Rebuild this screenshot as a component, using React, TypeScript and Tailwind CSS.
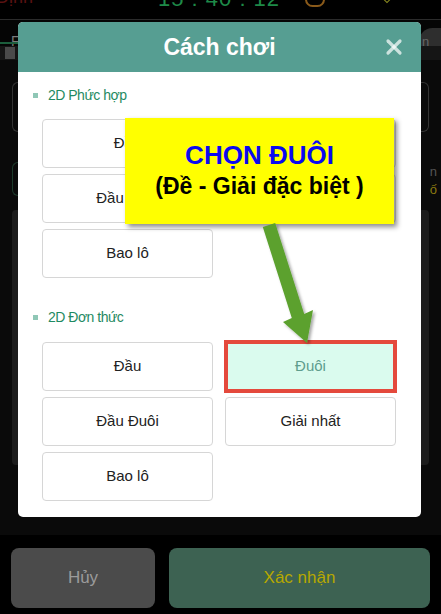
import React from 'react';
import { X } from 'lucide-react';

const font = { fontFamily: '"Liberation Sans", Arial, sans-serif' };

const OptionButton: React.FC<{ label: string; selected?: boolean }> = ({ label, selected }) => {
  if (selected) {
    return (
      <div className="relative flex h-[49px] items-center justify-center bg-[#dafbee] text-[15px] text-[#5e9d8d]">
        <span className="pointer-events-none absolute -inset-x-[1px] -top-[2px] -bottom-[2px] border-[4px] border-[#e4493c]" />
        {label}
      </div>
    );
  }
  return (
    <div className="flex h-[49px] items-center justify-center rounded-[4px] border border-[#d6d6d6] bg-white text-[15px] text-[#222]">
      {label}
    </div>
  );
};

const SectionLabel: React.FC<{ text: string }> = ({ text }) => (
  <div className="-ml-[9px] flex h-[14px] items-center gap-[10px] text-[14px] tracking-[-0.5px] text-[#1f8a62]">
    <span className="h-[5px] w-[5px] bg-[#8fc7b6]" />
    {text}
  </div>
);

const App: React.FC = () => {
  return (
    <div className="relative h-[614px] w-[441px] overflow-hidden bg-black" style={font}>
      {/* dimmed page behind the dialog */}
      <div className="flex h-[535px] flex-col bg-[#0a0a0a]">
        <div className="relative flex h-[19px] items-end overflow-hidden bg-black">
          <span className="absolute left-[-4px] top-[-16px] text-[18px] text-[#5a1212]">Định</span>
          <span className="absolute left-[158px] top-[-18px] text-[22px] tracking-[1px] text-[#1e8a48]">15 : 40 : 12</span>
          <span className="absolute left-[305px] top-[-8px] h-[15px] w-[20px] rounded-full border-[2px] border-[#8a5a1a]" />
          <span className="absolute left-[384px] top-[-4px] h-[6px] w-[6px] rotate-45 border border-[#8a8a20]" />
        </div>
        <div className="h-px bg-[#2b2b2b]" />
        <div className="relative h-[26px] bg-[#050505]">
          <span className="absolute left-[11px] top-[11px] text-[14px] text-[#7a7a7a]">F</span>
          <span className="absolute bottom-[2px] left-0 h-[2px] w-[20px] bg-[#1c5e3c]" />
          <span className="absolute right-[-12px] top-[8px] flex h-[27px] w-[34px] items-center rounded-full bg-[#2e2e2e] pl-[3px] text-[13px] text-[#666]">n</span>
        </div>
        <div className="relative h-[14px] bg-[#151515]">
          <span className="absolute left-[5px] top-[1px] h-[12px] w-[10px] bg-[#4a4a4a]" />
        </div>
        <div className="flex h-[150px] flex-col gap-[30px] px-[12px] pt-[22px]">
          <div className="flex h-[50px] justify-between">
            <span className="w-[20px] rounded-l-[6px] border border-r-0 border-[#333]" />
            <span className="w-[20px] rounded-r-[6px] border border-l-0 border-[#333]" />
          </div>
          <div className="relative flex h-[34px] justify-between">
            <span className="w-[20px] rounded-l-[6px] border border-r-0 border-[#1d3a2c]" />
            <span className="absolute right-[-8px] top-[0px] text-[13px] text-[#555]">n</span>
            <span className="absolute right-[-8px] top-[18px] text-[13px] text-[#8a7a10]">ố</span>
          </div>
        </div>
        <div className="mx-[12px] h-[255px] rounded-[4px] bg-[#1c1c1c]" />
      </div>

      <div className="flex h-[79px] gap-[14px] px-[11px] pt-[13px]">
        <button className="flex h-[60px] w-[144px] items-center justify-center rounded-[8px] bg-[#4b4b4b] text-[17px] text-[#9b9b9b]">
          Hủy
        </button>
        <button className="flex h-[60px] flex-1 items-center justify-center rounded-[8px] bg-[#3d6252] text-[17px] text-[#b7a800]">
          Xác nhận
        </button>
      </div>

      {/* dialog */}
      <div className="absolute left-[18px] top-[22px] w-[403px] overflow-hidden rounded-[5px] bg-white">
        <div className="relative flex h-[50px] items-center justify-center bg-[#569e92]">
          <span className="text-[23px] font-bold text-white">Cách chơi</span>
          <X className="absolute right-[15px] top-[13px] h-[24px] w-[24px] text-white/70" strokeWidth={3.2} />
        </div>
        <div className="flex flex-col px-[24px] pb-[16px] pt-[16px]">
          <SectionLabel text="2D Phức hợp" />
          <div className="mt-[17px] grid grid-cols-2 gap-x-[12px] gap-y-[6px] pr-[1px]">
            <OptionButton label="Đầu" />
            <OptionButton label="Đuôi" />
            <OptionButton label="Đầu Đuôi" />
            <OptionButton label="Giải nhất" />
            <OptionButton label="Bao lô" />
          </div>
          <div className="mt-[32px]">
            <SectionLabel text="2D Đơn thức" />
          </div>
          <div className="mt-[18px] grid grid-cols-2 gap-x-[12px] gap-y-[6px] pr-[1px]">
            <OptionButton label="Đầu" />
            <OptionButton label="Đuôi" selected />
            <OptionButton label="Đầu Đuôi" />
            <OptionButton label="Giải nhất" />
            <OptionButton label="Bao lô" />
          </div>
        </div>
      </div>

      {/* annotation */}
      <div className="absolute left-[125px] top-[118px] flex h-[106px] w-[269px] flex-col items-center justify-center bg-[#ffff00] shadow-[3px_3px_5px_rgba(0,0,0,0.45)]">
        <span className="text-[26px] font-bold leading-[30px] text-[#0a0af0]">CHỌN ĐUÔI</span>
        <span className="text-[23px] font-bold leading-[32px] text-black">(Đề - Giải đặc biệt )</span>
      </div>
      <svg className="pointer-events-none absolute left-0 top-0" width="441" height="614" viewBox="0 0 441 614">
        <defs>
          <filter id="sh" x="-20%" y="-20%" width="140%" height="140%">
            <feDropShadow dx="2" dy="2" stdDeviation="1.5" floodColor="#000" floodOpacity="0.35" />
          </filter>
        </defs>
        <polygon
          points="262.8,227 275.2,223 304.2,314 313,310 307,343 283,322 291.8,318"
          fill="#5ca12f"
          filter="url(#sh)"
        />
      </svg>
    </div>
  );
};

export default App;
